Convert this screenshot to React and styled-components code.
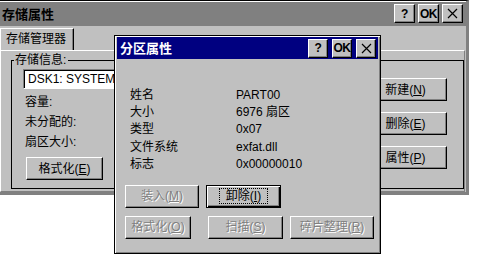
import React from "react";
import styled, { createGlobalStyle } from "styled-components";

const GlobalStyle = createGlobalStyle`
  html, body {
    margin: 0;
    padding: 0;
    background: #fff;
  }
  body {
    font-family: "Liberation Sans", "Noto Sans CJK SC", sans-serif;
    font-size: 12px;
    line-height: 14px;
    color: #000;
  }
  #root {
    position: relative;
    width: 479px;
    height: 265px;
    overflow: hidden;
  }
  * { box-sizing: border-box; }
`;

const FONT = `"Liberation Sans", "Noto Sans CJK SC", sans-serif`;

const Window = styled.div`
  width: 469px;
  height: 195px;
  background: #c0c0c0;
  border-top: 1px solid #000;
  border-right: 3px solid #808080;
  border-bottom: 3px solid #808080;
  display: flex;
  flex-direction: column;
`;

const TitleBar = styled.div`
  height: ${(p) => p.$h}px;
  flex: none;
  display: flex;
  align-items: center;
  justify-content: space-between;
  padding: 0 ${(p) => p.$pr}px 0 ${(p) => p.$pl}px;
  background: ${(p) => (p.$active ? "#000080" : "#808080")};
  color: ${(p) => (p.$active ? "#fff" : "#000")};
  box-shadow: ${(p) => (p.$active ? "none" : "inset 0 1px #fff")};
`;

const TitleText = styled.span`
  font-family: "Noto Sans CJK SC", sans-serif;
  font-weight: 700;
  font-size: 13px;
  line-height: 16px;
`;

const TitleButtons = styled.div`
  display: flex;
  gap: ${(p) => p.$gap}px;
`;

const CapButton = styled.div`
  width: ${(p) => p.$w}px;
  height: 19px;
  display: flex;
  align-items: center;
  justify-content: center;
  background: #c0c0c0;
  border: 1px solid;
  border-color: #fff #000 #000 #fff;
  box-shadow: inset -1px -1px #808080;
  color: #000;
  font-family: "Liberation Sans", sans-serif;
  font-weight: 700;
  font-size: 12px;
  line-height: 1;
  letter-spacing: -0.5px;
`;

const TabStrip = styled.div`
  display: flex;
  padding-top: 2px;
  height: 24px;
`;

const Tab = styled.div`
  width: 74px;
  height: 22px;
  border-top: 1px solid #fff;
  border-left: 1px solid #fff;
  border-right: 1px solid #000;
  box-shadow: inset -1px 0 #808080;
  font-family: ${FONT};
  font-size: 12px;
  line-height: 20px;
  padding-left: 5px;
`;

const TabPanel = styled.div`
  flex: 1;
  margin-right: 1px;
  border-top: 1px solid #fff;
  border-left: 1px solid #fff;
  border-right: 1px solid #808080;
  border-bottom: 1px solid #808080;
  padding: 9px 0 0 10px;
`;

const Group = styled.div`
  position: relative;
  width: 453px;
  height: 129px;
  border: 1px solid #000;
  display: flex;
  padding: 8px 0 0 11px;
`;

const GroupLabel = styled.span`
  position: absolute;
  top: -8px;
  left: 2px;
  padding: 0 2px 0 1px;
  background: #c0c0c0;
  font-size: 12px;
  line-height: 14px;
`;

const LeftCol = styled.div`
  width: 330px;
  display: flex;
  flex-direction: column;
`;

const ListBox = styled.div`
  width: 330px;
  height: 20px;
  background: #fff;
  border: 1px solid;
  border-color: #808080 #fff #fff #808080;
  box-shadow: inset 1px 1px #000;
  padding-left: 4px;
  line-height: 18px;
  font-size: 12px;
  white-space: nowrap;
  overflow: hidden;
`;

const InfoList = styled.div`
  margin-top: 3px;
  display: grid;
  grid-auto-rows: 20px;
  align-items: center;
  padding-left: 2px;
  line-height: 14px;
`;

const RightCol = styled.div`
  margin-left: 11px;
  padding-top: 9px;
  display: flex;
  flex-direction: column;
  gap: 11px;
`;

const Button = styled.div`
  width: ${(p) => p.$w}px;
  height: 23px;
  flex: none;
  display: flex;
  align-items: center;
  justify-content: center;
  background: #c0c0c0;
  border: 1px solid;
  border-color: #fff #000 #000 #fff;
  box-shadow: inset -1px -1px #808080;
  font-family: ${FONT};
  font-size: 12px;
  line-height: 14px;
  color: ${(p) => (p.$disabled ? "#808080" : "#000")};
  text-shadow: ${(p) => (p.$disabled ? "1px 1px #fff" : "none")};
  margin-left: ${(p) => p.$ml || 0}px;
  margin-top: ${(p) => p.$mt || 0}px;
`;

const DefaultButton = styled(Button)`
  border: 1px solid #000;
  box-shadow: inset 1px 1px #fff, inset -1px -1px #000, inset -2px -2px #808080;
`;

const FocusRing = styled.span`
  border: 1px dotted #000;
  padding: 0 6px;
  line-height: 14px;
`;

const Dialog = styled.div`
  position: absolute;
  left: 114px;
  top: 35px;
  width: 267px;
  height: 219px;
  background: #c0c0c0;
  border: 1px solid #000;
  box-shadow: inset 1px 1px #fff, inset -1px -1px #808080;
  padding: 1px 2px 2px 2px;
  display: flex;
  flex-direction: column;
`;

const PropGrid = styled.div`
  margin-top: 27px;
  padding-left: 13px;
  display: grid;
  grid-template-columns: 106px auto;
  grid-auto-rows: 17.4px;
  align-items: center;
  font-size: 12px;
  line-height: 14px;
`;

const ButtonRow = styled.div`
  display: flex;
  padding-left: 8px;
  margin-top: ${(p) => p.$mt}px;
  gap: 7px;
`;

const XIcon = () => (
  <svg width="11" height="11" viewBox="0 0 11 11">
    <path d="M1 1 L10 10 M10 1 L1 10" stroke="#000" strokeWidth="1.2" fill="none" />
  </svg>
);

const Caption = ({ $w, $gap }) => (
  <TitleButtons $gap={$gap}>
    <CapButton $w={$w}>?</CapButton>
    <CapButton $w={$w}>OK</CapButton>
    <CapButton $w={$w}>
      <XIcon />
    </CapButton>
  </TitleButtons>
);

const info = ["容量:", "未分配的:", "扇区大小:"];

const props = [
  ["姓名", "PART00"],
  ["大小", "6976 扇区"],
  ["类型", "0x07"],
  ["文件系统", "exfat.dll"],
  ["标志", "0x00000010"],
];

export default function App() {
  return (
    <>
      <GlobalStyle />
      <Window>
        <TitleBar $h={25} $pl={2} $pr={3}>
          <TitleText>存储属性</TitleText>
          <Caption $w={21} $gap={3} />
        </TitleBar>
        <TabStrip>
          <Tab>存储管理器</Tab>
        </TabStrip>
        <TabPanel>
          <Group>
            <GroupLabel>存储信息:</GroupLabel>
            <LeftCol>
              <ListBox>DSK1: SYSTEMPART</ListBox>
              <InfoList>
                {info.map((k) => (
                  <span key={k}>{k}</span>
                ))}
              </InfoList>
              <Button $w={77} $ml={3} $mt={5}>
                格式化(<u>E</u>)
              </Button>
            </LeftCol>
            <RightCol>
              <Button $w={83}>新建(<u>N</u>)</Button>
              <Button $w={83}>删除(<u>E</u>)</Button>
              <Button $w={83}>属性(<u>P</u>)</Button>
            </RightCol>
          </Group>
        </TabPanel>
      </Window>

      <Dialog>
        <TitleBar $active $h={22} $pl={3} $pr={2}>
          <TitleText>分区属性</TitleText>
          <Caption $w={20} $gap={4} />
        </TitleBar>
        <PropGrid>
          {props.map(([k, v]) => (
            <React.Fragment key={k}>
              <span>{k}</span>
              <span>{v}</span>
            </React.Fragment>
          ))}
        </PropGrid>
        <ButtonRow $mt={12}>
          <Button $w={74} $disabled>
            装入(<u>M</u>)
          </Button>
          <DefaultButton $w={75}>
            <FocusRing>
              卸除(<u>I</u>)
            </FocusRing>
          </DefaultButton>
        </ButtonRow>
        <ButtonRow $mt={8}>
          <Button $w={66} $disabled>
            格式化(<u>O</u>)
          </Button>
          <Button $w={75} $disabled $ml={10}>
            扫描(<u>S</u>)
          </Button>
          <Button $w={84} $disabled>
            碎片整理(<u>R</u>)
          </Button>
        </ButtonRow>
      </Dialog>
    </>
  );
}
